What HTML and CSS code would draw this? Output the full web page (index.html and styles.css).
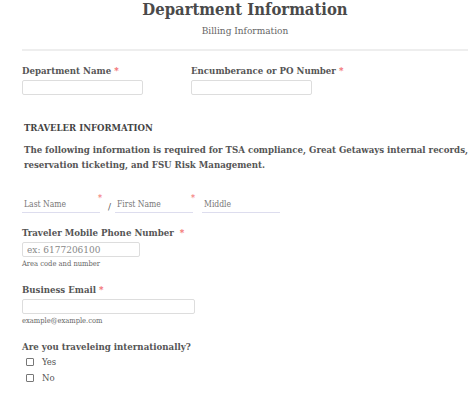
FILE: index.html
```html
<!DOCTYPE html>
<html lang="en">
<head>
    <meta charset="UTF-8">
    <title>Department Information</title>
    <link rel="stylesheet" href="styles.css">
</head>
<body>
    <div class="form-header">
        <h1>Department Information</h1>
        <div class="subtitle">Billing Information</div>
    </div>
    <form class="form-body">
        <div class="row">
            <div class="field field-dept">
                <label for="dept">Department Name <span class="req">*</span></label>
                <input type="text" id="dept" class="input">
            </div>
            <div class="field field-po">
                <label for="po">Encumberance or PO Number <span class="req">*</span></label>
                <input type="text" id="po" class="input">
            </div>
        </div>

        <h3 class="section-title">TRAVELER INFORMATION</h3>
        <p class="section-text">The following information is required for TSA compliance, Great Getaways internal records, reservation ticketing, and FSU Risk Management.</p>

        <div class="name-row">
            <div class="name-part">
                <span class="name-label">Last Name</span>
                <span class="req name-req">*</span>
            </div>
            <span class="slash">/</span>
            <div class="name-part">
                <span class="name-label">First Name</span>
                <span class="req name-req">*</span>
            </div>
            <div class="name-part">
                <span class="name-label">Middle</span>
            </div>
        </div>

        <div class="field with-hint">
            <label for="phone">Traveler Mobile Phone Number &nbsp;<span class="req">*</span></label>
            <input type="tel" id="phone" class="input input-phone" placeholder="ex: 6177206100">
            <div class="hint">Area code and number</div>
        </div>

        <div class="field with-hint">
            <label for="email">Business Email <span class="req">*</span></label>
            <input type="email" id="email" class="input input-email">
            <div class="hint">example@example.com</div>
        </div>

        <div class="field">
            <label>Are you traveleing internationally?</label>
            <div class="check"><span class="box"></span>Yes</div>
            <div class="check"><span class="box"></span>No</div>
        </div>
    </form>
</body>
</html>
```

FILE: styles.css
```css
body {
    margin: 0;
    font-family: "DejaVu Serif Condensed", "DejaVu Serif", serif;
    font-stretch: condensed;
    color: #555;
    background: #fff;
}
.form-header {
    text-align: center;
    margin: 0 4px 0 22px;
    padding-bottom: 13px;
    border-bottom: 2px solid #eee;
}
.form-header h1 {
    margin: 0;
    font-size: 16.5px;
    line-height: 20px;
    color: #4a4a4a;
}
.form-header .subtitle {
    margin-top: 5px;
    font-size: 10px;
    color: #666;
}
.form-body {
    padding: 14px 0 0 22px;
}
.row {
    display: flex;
    gap: 48px;
}
.field {
    margin-bottom: 13px;
}
.field.with-hint {
    margin-bottom: 16px;
}
.field label {
    display: block;
    font-size: 9.6px;
    font-weight: bold;
    color: #555;
    margin-bottom: 4px;
}
.req {
    color: #f26b6b;
}
.input {
    display: block;
    box-sizing: border-box;
    width: 121px;
    height: 15px;
    border: 1px solid #ddd;
    border-radius: 2px;
    font-family: inherit;
    font-size: 10px;
    padding: 0 4px;
    color: #555;
}
.input::placeholder {
    color: #888;
}
.input-phone {
    width: 118px;
}
.input-email {
    width: 173px;
}
.section-title {
    margin: 14px 0 0 2px;
    font-size: 9.5px;
    color: #444;
}
.section-text {
    margin: 9px 0 0 2px;
    font-size: 9.6px;
    letter-spacing: -0.02px;
    font-weight: bold;
    line-height: 15px;
    color: #555;
}
.name-row {
    display: flex;
    align-items: flex-end;
    margin: 20px 0 14px;
}
.name-part {
    position: relative;
    width: 76px;
    border-bottom: 1px solid #dde;
    padding: 0 0 1px 2px;
}
.name-label {
    font-size: 8.5px;
    color: #777;
}
.name-req {
    position: absolute;
    right: -2px;
    top: 1px;
    font-size: 9px;
}
.slash {
    font-size: 10px;
    padding: 0 4px 1px 8px;
}
.name-part + .name-part {
    margin-left: 9px;
}
.hint {
    font-size: 7.5px;
    color: #666;
    margin-top: 2px;
}
.check {
    display: flex;
    align-items: center;
    font-size: 9.5px;
    margin: 0 0 5px 4px;
}
.box {
    width: 6px;
    height: 6px;
    border: 1px solid #777;
    border-radius: 1px;
    margin-right: 8px;
}
```
